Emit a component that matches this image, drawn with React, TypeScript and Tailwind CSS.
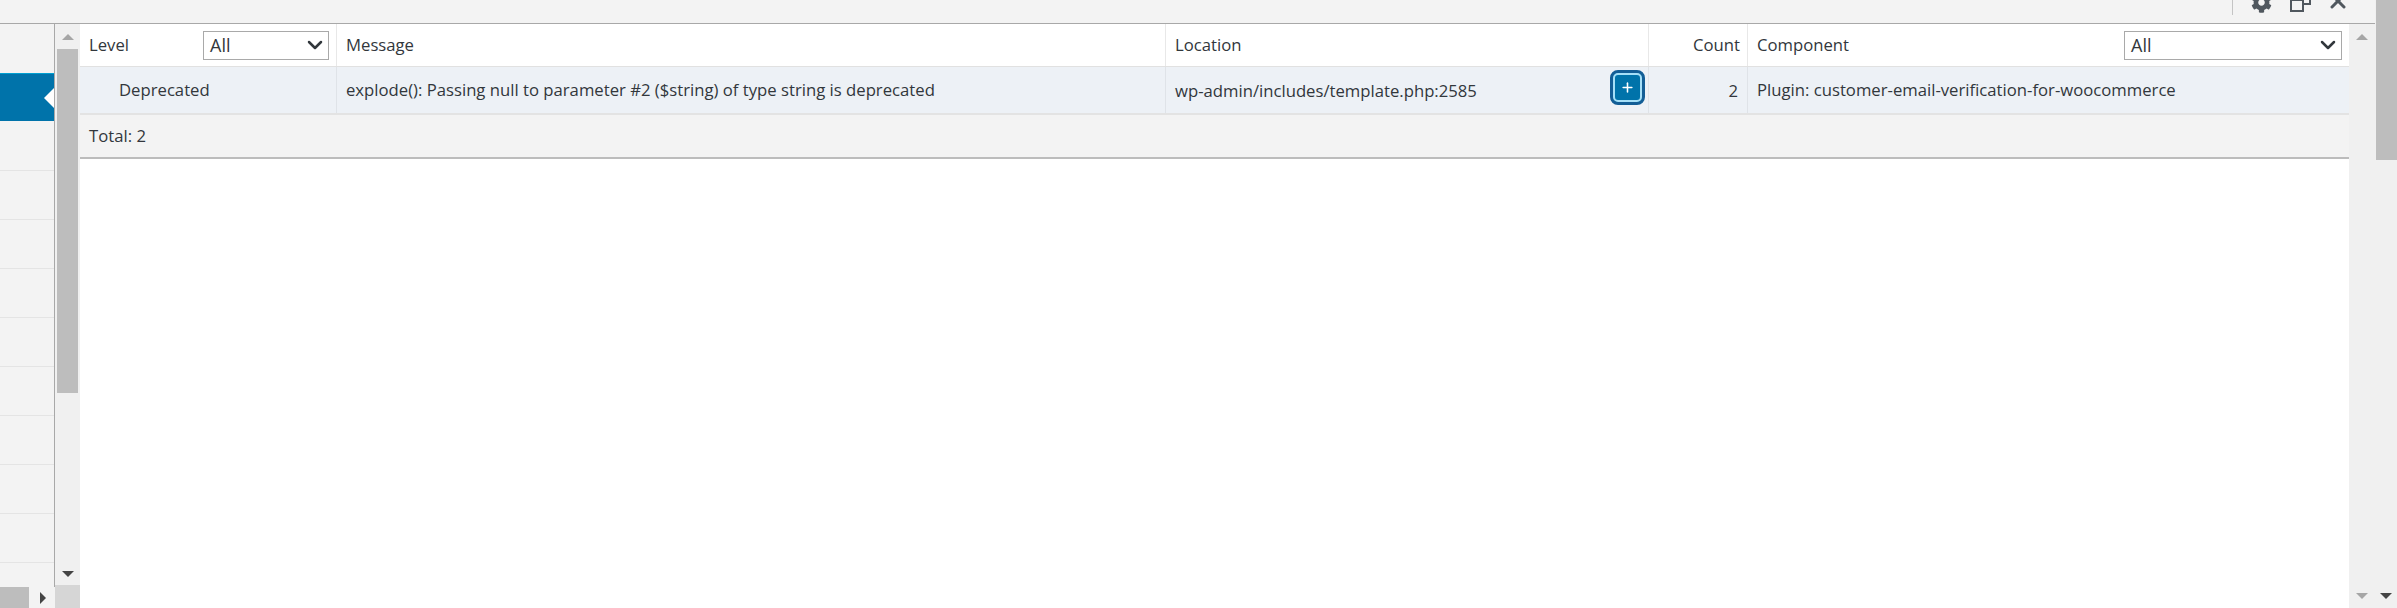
import { ChevronDown, Plus, X } from "lucide-react";
import { FaCog } from "react-icons/fa";

const font = "font-['Open_Sans','Noto_Sans',sans-serif]";

function Select({ className }: { className: string }) {
    return (
        <div className={`flex h-[29px] items-center justify-between border border-[#a9a9a9] bg-white pl-[6px] pr-px text-[18px] text-[#32373c] ${className}`}>
            <span>All</span>
            <ChevronDown size={24} strokeWidth={2.5} className="text-[#32373c]" />
        </div>
    );
}

function Tri({ dir, className }: { dir: "up" | "down" | "right"; className: string }) {
    const points = dir === "up" ? "0,6 12,6 6,0" : dir === "down" ? "0,0 12,0 6,6" : "0,0 6,6 0,12";
    const size = dir === "right" ? "h-[12px] w-[6px]" : "h-[6px] w-[12px]";
    return (
        <svg viewBox={dir === "right" ? "0 0 6 12" : "0 0 12 6"} className={`${size} ${className}`}>
            <polygon points={points} fill="currentColor" />
        </svg>
    );
}

export default function App() {
    const rows = [0, 1, 2, 3, 4, 5, 6, 7, 8];
    return (
        <div className={`flex h-[608px] w-[2397px] overflow-hidden bg-[#f3f3f3] text-[16.7px] text-[#32373c] ${font}`}>
            <div className="flex w-[2375px] flex-col">
                {/* Top toolbar */}
                <div className="relative h-[23px] shrink-0 border-b border-[#a8a8a8] box-content">
                    <div className="absolute left-[2232px] top-0 h-[15px] w-px bg-[#c4c4c4]" />
                    <FaCog size={21} className="absolute left-[2251px] top-[-8px] text-[#50575e]" />
                    <svg viewBox="0 0 22 20" className="absolute left-[2290px] top-[-7px] h-[20px] w-[22px] text-[#50575e]" fill="none" stroke="currentColor" strokeWidth="2">
                        <rect x="8" y="1" width="12" height="10" />
                        <rect x="1" y="7" width="12" height="11" fill="#f3f3f3" />
                    </svg>
                    <X size={24} strokeWidth={3} className="absolute left-[2326px] top-[-11px] text-[#50575e]" />
                </div>

                <div className="flex min-h-0 flex-1">
                    {/* Left nav */}
                    <div className="flex w-[55px] shrink-0 flex-col">
                        <div className="min-h-0 flex-1 overflow-hidden border-r border-[#a8a8a8] pt-[49px]">
                            <div className="relative mb-px h-[48px] border-t border-[#00a0d2] bg-[#0073aa]">
                                <div className="absolute right-0 top-[14px] h-0 w-0 border-y-[10px] border-r-[10px] border-y-transparent border-r-white" />
                            </div>
                            {rows.map((r) => (
                                <div key={r} className="h-[49px] border-b border-[#e4e4e4]" />
                            ))}
                        </div>
                        <div className="flex h-[21px] shrink-0 items-center">
                            <div className="h-full w-[29px] bg-[#bdbdbd]" />
                            <Tri dir="right" className="ml-[11px] text-[#444]" />
                        </div>
                    </div>

                    {/* Nav scrollbar */}
                    <div className="flex w-[25px] shrink-0 flex-col bg-[#f0f0f0]">
                        <div className="flex h-[25px] items-center justify-center pt-[1px]">
                            <Tri dir="up" className="text-[#a6a6a6]" />
                        </div>
                        <div className="mx-[2px] h-[344px] bg-[#bdbdbd]" />
                        <div className="flex flex-1 items-end justify-center pb-[8px]">
                            <Tri dir="down" className="text-[#444]" />
                        </div>
                        <div className="h-[23px] bg-[#d6d6d6]" />
                    </div>

                    {/* Table */}
                    <div className="flex w-[2269px] shrink-0 flex-col bg-white">
                        <div className="flex h-[43px] shrink-0 border-b border-[#e1e1e1]">
                            <div className="flex w-[256px] items-center justify-between pl-[9px] pr-[7px]">
                                <span>Level</span>
                                <Select className="w-[126px]" />
                            </div>
                            <div className="flex w-[829px] items-center border-l border-[#e8e8e8] pl-[9px]">Message</div>
                            <div className="flex w-[483px] items-center border-l border-[#e8e8e8] pl-[9px]">Location</div>
                            <div className="flex w-[99px] items-center justify-end border-l border-[#e8e8e8] pr-[7px]">Count</div>
                            <div className="flex flex-1 items-center justify-between border-l border-[#e8e8e8] pl-[9px] pr-[7px]">
                                <span>Component</span>
                                <Select className="w-[218px]" />
                            </div>
                        </div>
                        <div className="flex h-[48px] shrink-0 border-b-2 border-[#e3e3e3] bg-[#edf1f6]">
                            <div className="flex w-[256px] items-center pl-[39px]">Deprecated</div>
                            <div className="flex w-[829px] items-center border-l border-[#dfe3e8] pl-[9px]">explode(): Passing null to parameter #2 ($string) of type string is deprecated</div>
                            <div className="flex w-[483px] items-center justify-between border-l border-[#dfe3e8] pl-[9px] pr-[3px]">
                                <span className="pt-[2px]">wp-admin/includes/template.php:2585</span>
                                <div className="mb-[5px] flex h-[35px] w-[35px] items-center justify-center rounded-[8px] border-[3px] border-[#135e96] bg-[#0073aa]">
                                    <div className="flex h-[29px] w-[29px] items-center justify-center rounded-[5px] border-2 border-[#a5dff7]">
                                        <Plus size={15} strokeWidth={2.5} className="text-white" />
                                    </div>
                                </div>
                            </div>
                            <div className="flex w-[99px] items-center justify-end border-l border-[#dfe3e8] pr-[9px] pt-[2px]">2</div>
                            <div className="flex flex-1 items-center border-l border-[#dfe3e8] pl-[9px]">Plugin: customer-email-verification-for-woocommerce</div>
                        </div>
                        <div className="flex h-[44px] shrink-0 items-center border-b-2 border-[#bcbcbc] bg-[#f3f3f3] pl-[9px]">Total: 2</div>
                    </div>

                    {/* Table scrollbar */}
                    <div className="flex w-[26px] shrink-0 flex-col items-center justify-between bg-[#f0f0f0] pb-[9px] pt-[10px]">
                        <Tri dir="up" className="text-[#a6a6a6]" />
                        <Tri dir="down" className="text-[#a6a6a6]" />
                    </div>
                </div>
            </div>

            {/* Page scrollbar */}
            <div className="flex w-[22px] shrink-0 flex-col items-center bg-[#f0f0f0]">
                <div className="ml-[1px] h-[160px] w-[21px] shrink-0 bg-[#bdbdbd]" />
                <div className="flex flex-1 items-end pb-[9px]">
                    <Tri dir="down" className="text-[#444]" />
                </div>
            </div>
        </div>
    );
}
